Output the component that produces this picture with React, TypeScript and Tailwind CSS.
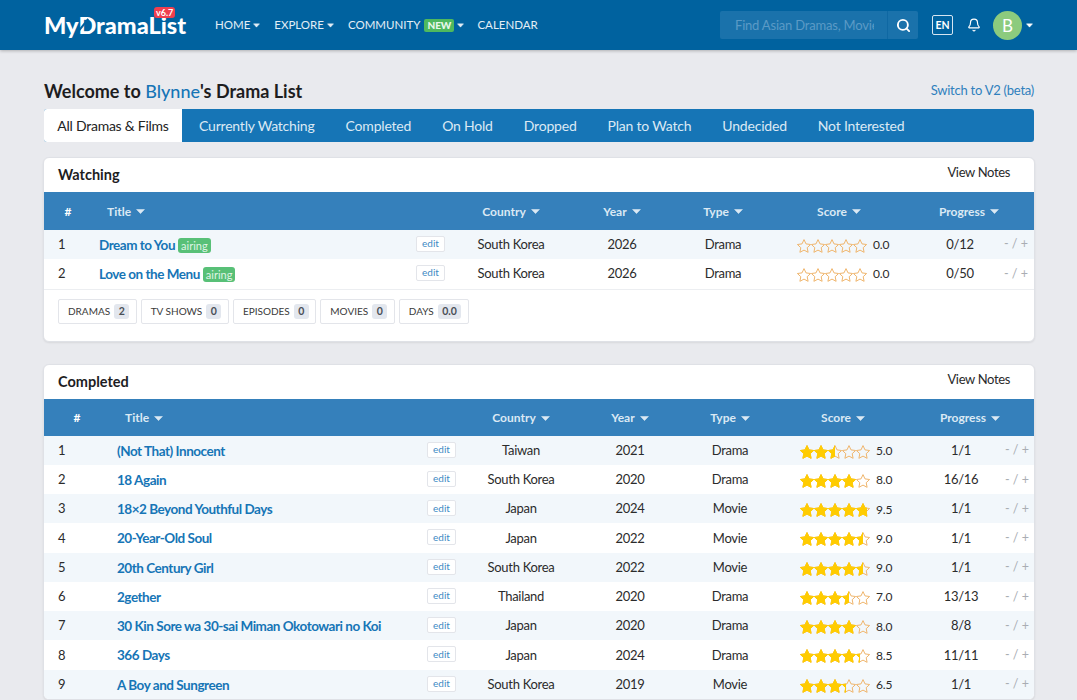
import React from "react";
import { Search, Bell } from "lucide-react";

const watching = [
  { title: "Dream to You", country: "South Korea", year: 2026, type: "Drama", score: 0, progress: "0/12", airing: true },
  { title: "Love on the Menu", country: "South Korea", year: 2026, type: "Drama", score: 0, progress: "0/50", airing: true },
];

const completed = [
  { title: "(Not That) Innocent", country: "Taiwan", year: 2021, type: "Drama", score: 5, progress: "1/1" },
  { title: "18 Again", country: "South Korea", year: 2020, type: "Drama", score: 8, progress: "16/16" },
  { title: "18×2 Beyond Youthful Days", country: "Japan", year: 2024, type: "Movie", score: 9.5, progress: "1/1" },
  { title: "20-Year-Old Soul", country: "Japan", year: 2022, type: "Movie", score: 9, progress: "1/1" },
  { title: "20th Century Girl", country: "South Korea", year: 2022, type: "Movie", score: 9, progress: "1/1" },
  { title: "2gether", country: "Thailand", year: 2020, type: "Drama", score: 7, progress: "13/13" },
  { title: "30 Kin Sore wa 30-sai Miman Okotowari no Koi", country: "Japan", year: 2020, type: "Drama", score: 8, progress: "8/8" },
  { title: "366 Days", country: "Japan", year: 2024, type: "Drama", score: 8.5, progress: "11/11" },
  { title: "A Boy and Sungreen", country: "South Korea", year: 2019, type: "Movie", score: 6.5, progress: "1/1" },
];

const tabs = ["Currently Watching", "Completed", "On Hold", "Dropped", "Plan to Watch", "Undecided", "Not Interested"];
const stats = [
  ["DRAMAS", "2"],
  ["TV SHOWS", "0"],
  ["EPISODES", "0"],
  ["MOVIES", "0"],
  ["DAYS", "0.0"],
];

const STAR = "M7 .6l2 4.3 4.6.6-3.4 3.2.9 4.6L7 11.1l-4.1 2.2.9-4.6L.4 5.5 5 4.9z";

const Caret = ({ className = "" }: { className?: string }) => (
  <svg width="9" height="5" viewBox="0 0 9 5" className={className}>
    <path d="M.6.4h7.8L4.5 4.6z" fill="currentColor" stroke="currentColor" strokeWidth=".6" strokeLinejoin="round" />
  </svg>
);

const StarRow = ({ filled }: { filled: boolean }) => (
  <svg width="70" height="14" viewBox="0 0 70 14" className="block shrink-0">
    {[0, 14, 28, 42, 56].map((x) => (
      <path
        key={x}
        d={STAR}
        transform={`translate(${x} 0)`}
        fill={filled ? "#ffcc00" : "none"}
        stroke={filled ? "#ffcc00" : "#efb56c"}
        strokeWidth="1"
      />
    ))}
  </svg>
);

const Stars = ({ score }: { score: number }) => (
  <div className="relative w-[70px] h-[14px] mt-[2px] shrink-0">
    <StarRow filled={false} />
    <div className="absolute left-0 top-0 h-[14px] overflow-hidden" style={{ width: `${score * 10}%` }}>
      <StarRow filled />
    </div>
  </div>
);

const Section = ({
  name,
  rows,
  cols,
  scorePad,
  headClass,
  rowClass,
  children,
}: {
  name: string;
  rows: typeof completed;
  cols: string;
  scorePad: string;
  headClass: string;
  rowClass?: string;
  children?: React.ReactNode;
}) => (
  <section className="bg-white rounded-[6px] border border-[#dfe1e6] -mx-px shadow-[0_1px_2px_rgba(0,0,0,0.08)] overflow-hidden">
    <div className="h-[34px] flex items-center justify-between pl-[14px] pr-[24px]">
      <h3 className="text-[14.5px] font-bold text-[#1d1d1f]">{name}</h3>
      <span className="text-[13px] tracking-[-0.35px] text-[#2a2a2a] -mt-[4px]">View Notes</span>
    </div>
    <div className={`grid ${cols} ${headClass} items-center bg-[#3580bb] text-[12px] font-bold text-[#dbe9f4]`}>
      <div className="text-center text-white">#</div>
      <div className="pl-[15px] flex items-center gap-[5px]">Title <Caret /></div>
      {["Country", "Year", "Type", "Score"].map((h) => (
        <div key={h} className="flex items-center justify-center gap-[5px]">{h} <Caret /></div>
      ))}
      <div className="flex items-center justify-center gap-[5px] pl-[18px]">Progress <Caret /></div>
      <div />
    </div>
    {rows.map((row: any, i) => (
      <div
        key={row.title}
        className={`grid ${cols} h-[29.25px] items-center text-[13px] tracking-[-0.3px] text-[#2b2b2b] ${rowClass ?? ""} ${i % 2 === 0 ? "bg-[#f2f7fb]" : "bg-white"}`}
      >
        <div className="pl-[14px]">{i + 1}</div>
        <div className="flex items-center justify-between pl-[7px] pr-[20px]">
          <div className="flex items-center gap-[3px]">
            <a className="text-[13.5px] font-bold text-[#1675b6] tracking-[-0.47px]">{row.title}</a>
            {row.airing && (
              <span className="mt-[1px] bg-[#58c077] text-[#dff4e5] text-[11px] leading-[15px] tracking-normal rounded-[3px] px-[3px]">airing</span>
            )}
          </div>
          <span className="h-[16px] w-[29px] -mt-[2px] flex items-center justify-center bg-white border border-[#e3e5ea] rounded-[2px] text-[10px] tracking-normal text-[#3d8ac4]">edit</span>
        </div>
        <div className="text-center">{row.country}</div>
        <div className="text-center">{row.year}</div>
        <div className="text-center">{row.type}</div>
        <div className={`flex items-center gap-[6px] ${scorePad}`}>
          <Stars score={row.score} />
          <span className="text-[12px] tracking-[-0.1px] mt-[1px]">{row.score.toFixed(1)}</span>
        </div>
        <div className="text-center">{row.progress}</div>
        <div className="pl-[3px] text-[12.5px] tracking-normal text-[#a9adb3] whitespace-nowrap">- / +</div>
      </div>
    ))}
    {children}
  </section>
);

const App = () => (
  <div className="h-[700px] overflow-hidden bg-[#e9eaee] font-['Lato','Noto_Sans',sans-serif]">
    <header className="relative z-10 h-[50px] bg-[#00629f] shadow-[0_1px_3px_rgba(0,0,0,0.25)] flex items-center pl-[44px] text-white">
      <div className="relative w-[142px] mr-[29px] text-[23.5px] leading-[50px] font-black whitespace-nowrap">
        MyDramaList
        <span className="absolute left-[38px] top-[17px] h-[17px] w-[2px] bg-[#00629f] rotate-[38deg]" />
        <span className="absolute left-[110px] top-[7px] h-[11px] px-[2px] bg-[#ef3f4f] rounded-[3px] text-[9px] leading-[11px] font-bold">v6.7</span>
      </div>
      <nav className="flex items-center text-[11.5px] text-[#e3eef6]">
        <span className="flex items-center gap-[3px]">HOME <Caret className="w-[7px]" /></span>
        <span className="flex items-center gap-[3px] ml-[14px]">EXPLORE <Caret className="w-[7px]" /></span>
        <span className="flex items-center ml-[14px]">
          COMMUNITY
          <span className="ml-[4px] mr-[3px] h-[13px] w-[30px] text-center bg-[#4fb95e] rounded-[2px] text-[10px] leading-[13px] font-black text-[#e8f7ea]">NEW</span>
          <Caret className="w-[7px]" />
        </span>
        <span className="ml-[13px]">CALENDAR</span>
      </nav>
      <div className="ml-auto flex items-center pr-[44px]">
        <div className="w-[198px] h-[28px] flex rounded-[2px] bg-[#1a72ab] overflow-hidden">
          <div className="w-[168px] pl-[15px] text-[13px] tracking-[-0.2px] leading-[28px] text-[#5b9ac6] whitespace-nowrap overflow-hidden border-r border-[#0f68a3]">
            <span className="block w-[139px] overflow-hidden">Find Asian Dramas, Movies</span>
          </div>
          <div className="flex-1 flex items-center justify-center">
            <Search size={15} strokeWidth={3} />
          </div>
        </div>
        <div className="ml-[14px] w-[21px] h-[20px] border border-[#d5e5f1] rounded-[2px] text-[10.5px] font-bold leading-[18px] text-center">EN</div>
        <Bell size={14} className="ml-[14px]" strokeWidth={2} />
        <div className="ml-[12px] w-[29px] h-[29px] rounded-full bg-[#8ccb7e] text-[17px] leading-[29px] text-center">B</div>
        <Caret className="w-[7px] ml-[4px]" />
      </div>
    </header>

    <main className="pl-[44px] pr-[43px] pt-[29px]">
      <div className="flex items-start justify-between h-[30px]">
        <h1 className="text-[18px] font-bold text-[#1d1d1f] leading-[24px]">
          Welcome to <span className="text-[#1675b6] font-medium">Blynne</span>'s Drama List
        </h1>
        <a className="text-[13px] tracking-[-0.25px] text-[#2f80bd] leading-[24px] -mt-[1px]">Switch to V2 (beta)</a>
      </div>
      <div className="h-[33px] bg-[#1675b6] rounded-[3px] flex items-center text-[14px] tracking-[-0.2px] text-[#dbe9f4] overflow-hidden">
        <div className="h-full w-[138px] bg-white flex items-center justify-center tracking-[-0.25px] text-[#232323]">All Dramas &amp; Films</div>
        <div className="flex gap-[31px] pl-[17px]">
          {tabs.map((t) => <span key={t}>{t}</span>)}
        </div>
      </div>

      <div className="mt-[15px]">
        <Section
          name="Watching"
          rows={watching as any}
          cols="grid-cols-[48px_373px_92px_130px_72px_160px_82px_31px]"
          scorePad="pl-[38px]"
          headClass="h-[38px] pt-[1px]"
        >
          <div className="border-t border-[#eceef1] h-[52px] pt-[9px] pl-[14px] flex gap-[4px] text-[10px] text-[#3a3a3a]">
            {stats.map(([label, n]) => (
              <div key={label} className="h-[25px] flex items-center gap-[4px] pl-[9px] pr-[6.5px] bg-white border border-[#e3e5ea] rounded-[2px]">
                {label}
                <span className="h-[15px] px-[4.5px] rounded-[3px] bg-[#e3e7ee] text-[10.5px] leading-[15px] font-bold text-[#4a4f57]">{n}</span>
              </div>
            ))}
          </div>
        </Section>
      </div>

      <div className="mt-[22px]">
        <Section
          name="Completed"
          rows={completed as any}
          cols="grid-cols-[66px_366px_90px_128px_72px_154px_82px_32px]"
          scorePad="pl-[34px]"
          headClass="h-[37px] pt-[2px]"
          rowClass="pt-[1px]"
        />
      </div>
    </main>
  </div>
);

export default App;
